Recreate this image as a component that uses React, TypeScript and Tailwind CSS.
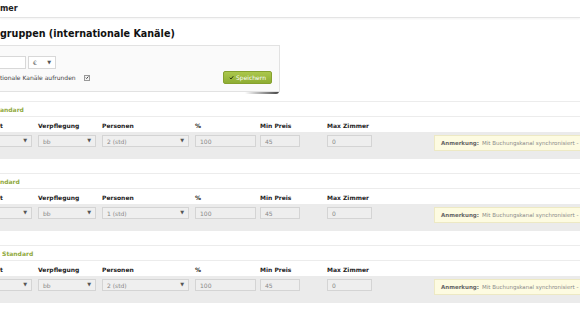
import React from "react";

const sections = [
  { title: "andard", persons: "2 (std)" },
  { title: "ndard", persons: "1 (std)" },
  { title: "\u00a0Standard", persons: "2 (std)" },
];

function Arrow() {
  return <span className="text-[5px] text-[#555]">▼</span>;
}

function SelectBox({ value, className }: { value: string; className: string }) {
  return (
    <div
      className={`flex h-[12px] shrink-0 items-center justify-between border border-[#d4d4d4] bg-[#efefef] px-[4px] text-[6px] text-[#888] ${className}`}
    >
      <span>{value}</span>
      <Arrow />
    </div>
  );
}

function InputBox({ value, className }: { value: string; className: string }) {
  return (
    <div
      className={`flex h-[12px] shrink-0 items-center border border-[#d4d4d4] bg-[#eeeeee] px-[4px] text-[6px] text-[#888] ${className}`}
    >
      {value}
    </div>
  );
}

function Section({ title, persons }: { title: string; persons: string }) {
  return (
    <div className="border-t border-[#ececec]">
      <div className="flex h-[14px] items-center text-[6px] font-bold text-[#8fa93c]">{title}</div>
      <div className="flex h-[16px] items-end border-t border-[#ececec] pb-[2px] text-[6px] font-bold text-[#222]">
        <div className="w-[38px] shrink-0">t</div>
        <div className="w-[64px] shrink-0">Verpflegung</div>
        <div className="w-[93px] shrink-0">Personen</div>
        <div className="w-[65px] shrink-0">%</div>
        <div className="w-[67px] shrink-0">Min Preis</div>
        <div>Max Zimmer</div>
      </div>
      <div className="flex h-[27px] items-start bg-[#ebebeb] pt-[3px]">
        <SelectBox value="" className="w-[32px] border-l-0" />
        <SelectBox value="bb" className="ml-[6px] w-[58px]" />
        <SelectBox value={persons} className="ml-[6px] w-[87px]" />
        <InputBox value="100" className="ml-[6px] w-[61px]" />
        <InputBox value="45" className="ml-[4px] w-[40px]" />
        <InputBox value="0" className="ml-[27px] w-[45px]" />
        <div className="ml-[62px] flex h-[16px] min-w-0 flex-1 items-center overflow-hidden whitespace-nowrap border border-r-0 border-[#ede9c4] bg-[#fdfbe1] pl-[6px] text-[5.5px] text-[#8a8a8a]">
          <span className="font-bold text-[#666]">Anmerkung:</span>
          <span className="ml-[3px]">Mit Buchungskanal synchronisiert -</span>
        </div>
      </div>
      <div className="h-[14px]" />
    </div>
  );
}

export default function App() {
  return (
    <div
      className="h-[320px] w-[580px] overflow-hidden bg-white"
      style={{ fontFamily: '"DejaVu Sans", Verdana, sans-serif' }}
    >
      <div className="flex h-[18px] items-center border-b border-[#e4e4e4] text-[8px] font-bold text-[#222] shadow-[0_1px_2px_rgba(0,0,0,0.05)]">
        mer
      </div>

      <div className="flex h-[27px] items-end pb-[4px] text-[9.6px] font-bold text-[#111]">
        gruppen (internationale Kanäle)
      </div>

      <div className="relative w-[280px]">
        <div className="absolute bottom-[-2px] right-[1px] h-[3px] w-[34px] rounded-br-[3px] bg-gradient-to-r from-transparent to-[#444] blur-[0.5px]" />
        <div className="relative h-[47px] border border-l-0 border-[#e2e2e2] bg-[#fafafa] pt-[10px]">
          <div className="flex">
            <div className="h-[13px] w-[26px] border border-l-0 border-[#d8d8d8] bg-white" />
            <div className="ml-[2px] flex h-[13px] w-[28px] items-center justify-between border border-[#d8d8d8] bg-white px-[4px] text-[6px] text-[#666]">
              <span>€</span>
              <Arrow />
            </div>
          </div>
          <div className="mt-[2px] flex items-center justify-between pr-[7px]">
            <div className="flex items-center text-[6px] text-[#444]">
              <span>tionale Kanäle aufrunden</span>
              <span className="ml-[8px] flex h-[6px] w-[6px] items-center justify-center border border-[#999] bg-[#f4f4f4]">
                <svg viewBox="0 0 10 10" className="h-[5px] w-[5px]">
                  <path d="M2 5.5 L4 7.5 L8.5 2.5" stroke="#222" strokeWidth="2" fill="none" />
                </svg>
              </span>
            </div>
            <div className="flex h-[13px] w-[49px] items-center justify-center gap-[2px] rounded-[2px] border border-[#86a12e] bg-gradient-to-b from-[#abc74c] to-[#8ead33] text-[6px] text-white">
              <svg viewBox="0 0 10 10" className="h-[5px] w-[5px]">
                <path d="M1.5 5.5 L4 8 L8.5 2.5" stroke="#2d3a10" strokeWidth="2" fill="none" />
              </svg>
              <span>Speichern</span>
            </div>
          </div>
        </div>
      </div>

      <div className="h-[9px]" />

      {sections.map((s, i) => (
        <Section key={i} title={s.title} persons={s.persons} />
      ))}
    </div>
  );
}
